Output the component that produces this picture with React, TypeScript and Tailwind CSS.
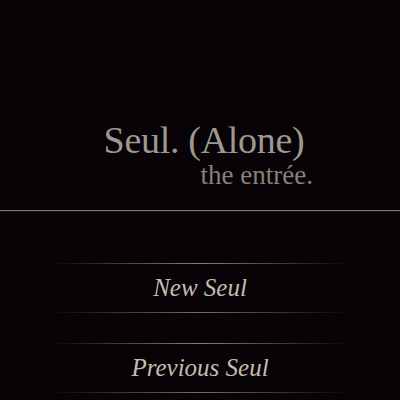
export default function App() {
  const buttons = ["New Seul", "Previous Seul"];

  return (
    <div className="h-[400px] w-[400px] overflow-hidden bg-[#080306] flex flex-col">
      {/* title */}
      <div className="pt-[121px] flex flex-col">
        <h1 className="text-center pl-[8px] text-[38px] leading-none text-[#9d9892] font-['Liberation_Serif',serif] tracking-[-0.3px]">
          Seul. (Alone)
        </h1>
        <p className="self-end pr-[87px] mt-[3px] text-[27px] leading-none text-[#86817b] font-['Liberation_Serif',serif]">
          the entrée.
        </p>
      </div>

      {/* divider */}
      <div className="mt-[21px] h-px bg-[#7d7b79]" />
      <div className="h-px bg-[#1a1618]" />

      {/* menu */}
      <div className="mt-[51px] flex flex-col gap-[30px]">
        {buttons.map((label) => (
          <button key={label} className="flex flex-col items-stretch">
            <div className="mx-[50px] h-px bg-gradient-to-r from-transparent via-[#86807a] to-transparent" />
            <span className="h-[48px] leading-[48px] text-center italic text-[25px] text-[#c4bcb0] font-['Liberation_Serif',serif]">
              {label}
            </span>
            <div className="mx-[50px] h-px bg-gradient-to-r from-transparent via-[#726d68] to-transparent" />
          </button>
        ))}
      </div>
    </div>
  );
}
